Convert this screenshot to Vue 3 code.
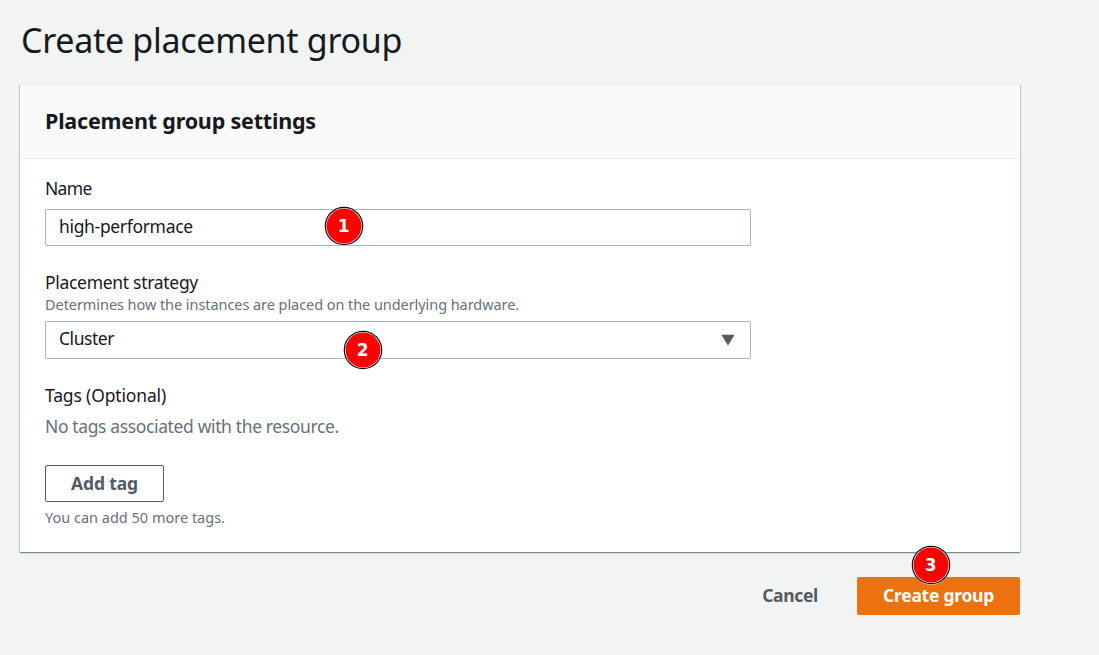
<script setup>
const steps = [1, 2, 3]
</script>

<template>
  <main class="page">
    <h1 class="title">Create placement group</h1>
    <section class="panel">
      <header class="panel-head"><h2>Placement group settings</h2></header>
      <div class="panel-body">
        <div class="field name-field">
          <label class="label"><span class="t-name">Name</span></label>
          <div class="control"><span class="t-value">high-performace</span></div>
        </div>
        <div class="field strategy-field">
          <label class="label"><span class="t-strategy">Placement strategy</span></label>
          <p class="hint"><span class="t-hint">Determines how the instances are placed on the underlying hardware.</span></p>
          <div class="control select">
            <span class="t-cluster">Cluster</span>
            <svg class="caret" width="14" height="12" viewBox="0 0 14 12"><path d="M1.3 1.3h11.4L7 10.4z" fill="#545b64" stroke="#545b64" stroke-width="1.2" stroke-linejoin="round" /></svg>
          </div>
        </div>
        <div class="field tags-field">
          <div class="label"><span class="t-tags">Tags (Optional)</span></div>
          <p class="empty"><span class="t-empty">No tags associated with the resource.</span></p>
          <button class="btn add"><span class="t-add">Add tag</span></button>
          <p class="hint more"><span class="t-more">You can add 50 more tags.</span></p>
        </div>
      </div>
    </section>
    <footer class="actions">
      <button class="btn cancel"><span class="t-cancel">Cancel</span></button>
      <button class="btn primary"><span class="t-create">Create group</span></button>
    </footer>
    <svg v-for="n in steps" :key="n" class="step" :class="'step-' + n" width="42" height="42" viewBox="0 0 42 42">
      <circle cx="21" cy="21" r="19.7" fill="#fff" fill-opacity=".7" />
      <circle cx="21" cy="21" r="19.3" fill="#111" />
      <circle cx="21" cy="21" r="18.1" fill="#fff" />
      <circle cx="21" cy="21" r="17.5" fill="#f00" />
      <text x="20.7" y="27.4" text-anchor="middle">{{ n }}</text>
    </svg>
  </main>
</template>

<style>
body { background: #f2f4f3; }
</style>

<style scoped>
.page {
  position: relative;
  box-sizing: border-box;
  width: 1099px;
  height: 655px;
  padding: 18px 79px 0 20px;
  overflow: hidden;
  background: #f2f4f3;
  color: #16191f;
  font: 17.5px/27px "Noto Sans", "Open Sans", sans-serif;
}
h1, h2, p { margin: 0; }
.title { height: 44px; line-height: 44px; padding-left: 1px; font-size: 34px; font-weight: 400; letter-spacing: -.29px; white-space: nowrap; }
.panel {
  box-sizing: border-box;
  margin-top: 22px;
  height: 468px;
  background: #fff;
  box-shadow: 0 1px 1px 0 rgba(0, 28, 36, .3), 1px 1px 1px 0 rgba(0, 28, 36, .15), -1px 1px 1px 0 rgba(0, 28, 36, .15);
  border-top: 1px solid #eaeded;
}
.panel-head {
  box-sizing: border-box;
  height: 74px;
  padding: 20px 25px;
  background: #fafafa;
  border-bottom: 1px solid #eaeded;
}
h2 { font-size: 21.5px; line-height: 32px; font-weight: 700; letter-spacing: -.2px; white-space: nowrap; }
.panel-body { padding: 16px 25px; }
.label { display: block; height: 27px; white-space: nowrap; }
.control {
  box-sizing: border-box;
  display: flex;
  align-items: center;
  width: 706px;
  height: 37px;
  padding: 0 14px 2px 13px;
  border: 1px solid #aab7b8;
  border-radius: 2px;
  background: #fff;
}
.name-field .control { margin-top: 7px; }
.strategy-field { margin-top: 23px; }
.strategy-field .label { height: 24px; }
.select { justify-content: space-between; height: 38px; margin-top: 6px; padding-bottom: 3px; }
.caret { display: block; margin: 3px 1px 0 0; }
.hint { height: 22px; color: #687078; font-size: 14.5px; line-height: 22px; white-space: nowrap; }
.tags-field { margin-top: 23px; }
.empty { margin-top: 4px; color: #687078; white-space: nowrap; }
.btn {
  box-sizing: border-box;
  display: flex;
  align-items: center;
  justify-content: center;
  padding: 0 0 2px;
  border: 1px solid transparent;
  border-radius: 2px;
  background: transparent;
  color: #545b64;
  font: 700 17.5px/24px "Noto Sans", "Open Sans", sans-serif;
  white-space: nowrap;
}
.add { width: 119px; height: 37px; margin-top: 25px; border-color: #545b64; background: #fff; }
.more { margin-top: 4px; }
.actions { display: flex; justify-content: flex-end; gap: 14px; margin-top: 25px; }
.cancel { width: 106px; height: 38px; }
.primary { width: 163px; height: 38px; background: #ec7211; color: #fff; }
.t-name { letter-spacing: -.7px; }
.t-value { letter-spacing: -.33px; }
.t-strategy { letter-spacing: -.3px; }
.t-hint { letter-spacing: -.065px; }
.t-cluster { letter-spacing: -.45px; }
.t-tags { letter-spacing: -.15px; }
.t-empty { letter-spacing: -.37px; }
.t-add { letter-spacing: -.15px; }
.t-cancel { letter-spacing: -.35px; }
.t-create { letter-spacing: -.27px; }
.step { position: absolute; display: block; }
.step text { fill: #fff; font: 700 17px "DejaVu Sans", sans-serif; }
.step-1 { left: 323px; top: 205px; }
.step-2 { left: 342px; top: 329px; }
.step-3 { left: 910px; top: 544px; }
</style>
